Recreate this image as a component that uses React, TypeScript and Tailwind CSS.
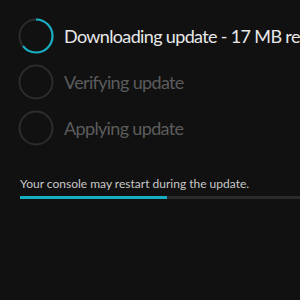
import React from "react";

const R = 16.5;
const C = 2 * Math.PI * R;

function Ring({ progress }: { progress?: number }) {
  return (
    <svg width="36" height="36" viewBox="0 0 36 36" className="shrink-0">
      <circle cx="18" cy="18" r={R} fill="none" stroke="#2c2c2c" strokeWidth="2" />
      {progress !== undefined && (
        <circle
          cx="18"
          cy="18"
          r={R}
          fill="none"
          stroke="#17aec2"
          strokeWidth="2.2"
          strokeDasharray={`${C * progress} ${C}`}
          transform="rotate(-90 18 18)"
        />
      )}
    </svg>
  );
}

export default function App() {
  return (
    <div
      className="w-[300px] h-[300px] bg-[#111111] overflow-hidden"
      style={{ fontFamily: 'Lato, "Noto Sans", sans-serif' }}
    >
      <div className="pt-[18px] pl-[18px] flex flex-col gap-[10px]">
        <div className="flex items-center gap-[10px] h-[36px] whitespace-nowrap">
          <Ring progress={0.64} />
          <span className="text-[18px] text-[#e8e8e8] tracking-[-0.65px]">Downloading update - 17 MB remaining</span>
        </div>
        <div className="flex items-center gap-[10px] h-[36px] whitespace-nowrap">
          <Ring />
          <span className="text-[18px] text-[#5c5c5c] tracking-[-0.65px]">Verifying update</span>
        </div>
        <div className="flex items-center gap-[10px] h-[36px] whitespace-nowrap">
          <Ring />
          <span className="text-[18px] text-[#5c5c5c] tracking-[-0.65px]">Applying update</span>
        </div>
      </div>
      <div className="pl-[20px] mt-[30px]">
        <div className="text-[12px] leading-[16px] text-[#c8c8c8] whitespace-nowrap">
          Your console may restart during the update.
        </div>
        <div className="mt-[4px] h-[3px] bg-[#2a2a2a] flex">
          <div className="h-full w-[147px] bg-[#17aec2]" />
        </div>
      </div>
    </div>
  );
}
